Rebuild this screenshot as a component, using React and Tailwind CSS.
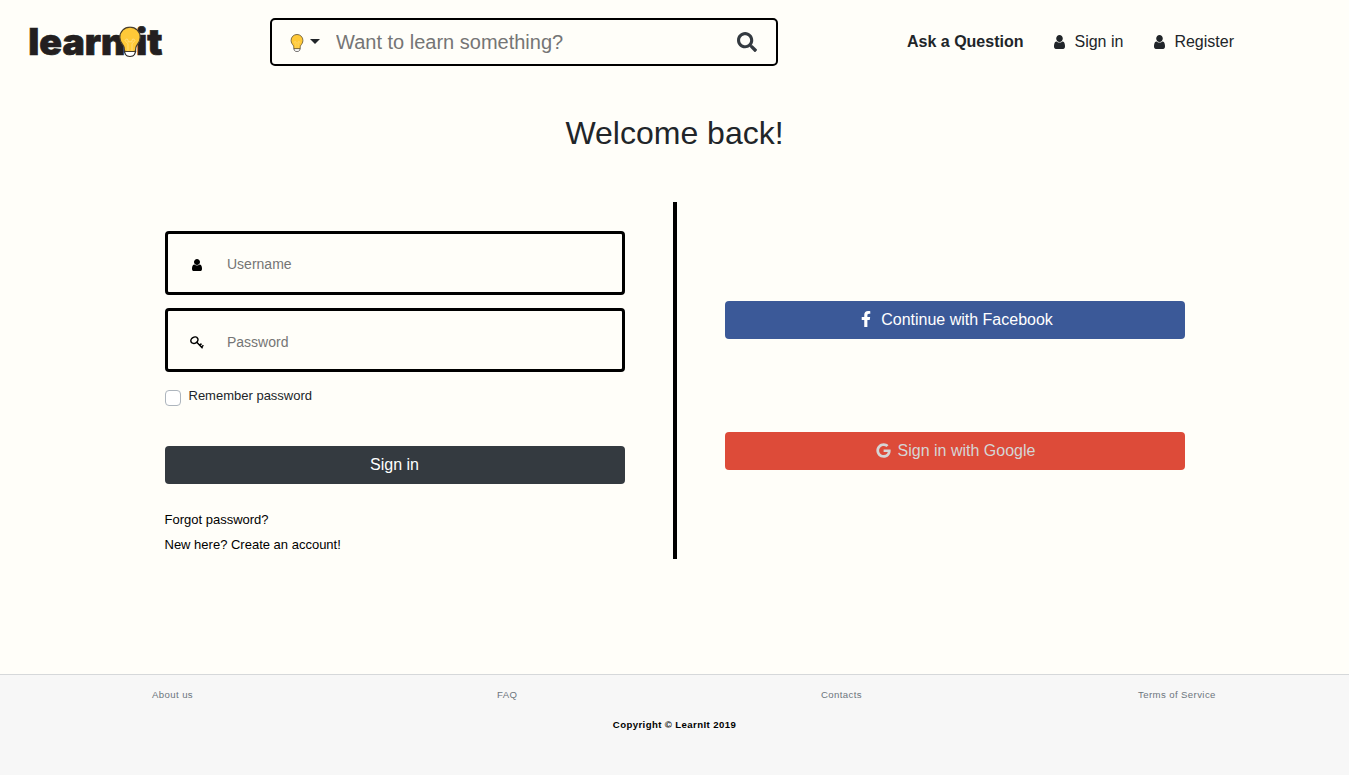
import React from "react";
import { FaSearch, FaFacebookF, FaGoogle } from "react-icons/fa";

function UserIcon({ className }) {
  return (
    <svg viewBox="256 128 1280 1536" preserveAspectRatio="none" className={className} fill="currentColor">
      <path d="M1536 1399q0 109-62.5 187t-150.5 78h-854q-88 0-150.5-78t-62.5-187q0-85 8.5-160.5t31.5-152 58.5-131 94-89 134.5-34.5q131 128 313 128t313-128q76 0 134.5 34.5t94 89 58.5 131 31.5 152 8.5 160.5zm-256-887q0 159-112.5 271.5t-271.5 112.5-271.5-112.5-112.5-271.5 112.5-271.5 271.5-112.5 271.5 112.5 112.5 271.5z" />
    </svg>
  );
}

function KeyIcon({ className }) {
  return (
    <svg viewBox="0 0 14 13" className={className} fill="none" stroke="currentColor" strokeWidth="1.5">
      <ellipse cx="4.400" cy="4.200" rx="3.700" ry="3" transform="rotate(-30 4.4 4.2)" />
      <path d="M6.800 6.200 12.600 12.200M9.800 9.300l1.700-1.700M11.600 11l1.800-1.700" />
    </svg>
  );
}

function Bulb({ className }) {
  return (
    <svg viewBox="0 0 22 31" className={className}>
      <path d="M5.300 25h11.400l-1.200 3.200c-.8 1.300-2.500 2-4.500 2s-3.700-.7-4.500-2z" fill="#fff" stroke="#231f20" strokeWidth="1.100" />
      <path d="M11 .8C5.200.8.8 5.300.8 11c0 4.300 2.200 6.600 3.700 8.600.8 1.200.9 2.700.9 4.200 0 .9.500 1.400 1.300 1.400h8.600c.8 0 1.300-.5 1.300-1.400 0-1.500.1-3 .9-4.200 1.500-2 3.700-4.300 3.700-8.600C21.200 5.300 16.800.8 11 .8z" fill="#ffc938" stroke="#4a3f2c" strokeWidth="1.200" />
      <path d="M9 24.500v-7.200L6.700 15.200a1.400 1.400 0 1 1 2.300-1.300v1.600h4v-1.600a1.400 1.400 0 1 1 2.300 1.300L13 17.300v7.200" fill="none" stroke="#ffdf80" strokeWidth=".9" />
    </svg>
  );
}

function Logo() {
  return (
    <svg viewBox="0 0 150 60" className="h-[60px] w-[150px] overflow-visible" role="img" aria-label="learnit">
      <g fill="#231f20" stroke="#231f20" strokeWidth="0.7" fontFamily="Inter, sans-serif" fontWeight="900" fontSize="36.5">
        <text x="1.300" y="43" textLength="97" lengthAdjust="spacingAndGlyphs">learn</text>
        <text x="109" y="43" textLength="26.500" lengthAdjust="spacingAndGlyphs">it</text>
      </g>
      <svg x="92" y="14.300" width="22" height="31"><Bulb /></svg>
    </svg>
  );
}

function Field({ icon, label, type, inputClass }) {
  return (
    <label className="flex h-16 items-center rounded border-[3px] border-black">
      <span className="flex w-[59px] justify-center pt-1 pr-[2px]">{icon}</span>
      <input type={type} placeholder={label} className={`w-80 bg-transparent text-sm outline-none placeholder:text-[#757575] ${inputClass}`} />
    </label>
  );
}

export default function App() {
  return (
    <div className="flex h-[775px] w-[1349px] flex-col overflow-hidden bg-[#fffef9] font-['Liberation_Sans',Arial,sans-serif] text-[#212529]">
      <header className="flex h-[84px] items-center">
        <div className="w-[270px] pl-[27px]"><Logo /></div>
        <div className="flex h-12 w-[508px] items-center rounded-[5px] border-2 border-black pr-[19px] pl-[18px]">
          <Bulb className="mt-0.5 h-[18px] w-[14px]" />
          <span className="mb-0.5 ml-1.5 border-x-[5px] border-t-[5px] border-x-transparent border-t-[#212529]" />
          <input placeholder="Want to learn something?" className="ml-4 w-[300px] flex-1 bg-transparent text-xl outline-none placeholder:text-[#757575]" />
          <FaSearch className="h-5 w-5 text-[#343a40]" />
        </div>
        <nav className="ml-[129px] flex items-center">
          <a className="font-bold">Ask a Question</a>
          <a className="ml-[31px] flex items-center"><UserIcon className="mr-[9px] mb-px h-[14px] w-[11px]" />Sign in</a>
          <a className="ml-[31px] flex items-center"><UserIcon className="mr-[9px] mb-px h-[14px] w-[11px]" />Register</a>
        </nav>
      </header>
      <h1 className="mt-7 text-center text-[32px] leading-[42px]">Welcome back!</h1>
      <main className="mr-[164px] ml-[165px] mt-12 flex h-[357px]">
        <form className="w-[460px] shrink-0 pt-[29px]">
          <Field type="text" label="Username" inputClass="pt-0.5" icon={<UserIcon className="h-3 w-[10px] text-black" />} />
          <div className="mt-[13px]"><Field type="password" label="Password" inputClass="pt-1" icon={<KeyIcon className="h-[13px] w-[14px] text-black" />} /></div>
          <label className="mt-[14px] flex h-5 text-[13px]">
            <span className="mt-1 mr-[7.5px] h-4 w-4 rounded border border-[#adb5bd] bg-white" />
            <span className="leading-5">Remember password</span>
          </label>
          <button type="button" className="mt-10 h-[38px] w-full rounded bg-[#343a40] pr-px text-base text-white">Sign in</button>
          <div className="mt-[23px] -ml-[0.5px] flex flex-col text-[13px] leading-[25px] text-black">
            <a>Forgot password?</a>
            <a>New here? Create an account!</a>
          </div>
        </form>
        <div className="ml-12 w-1 shrink-0 bg-black" />
        <div className="ml-12 w-[460px] shrink-0 pt-[99px]">
          <button className="flex h-[38px] w-full items-center justify-center rounded bg-[#3b5998] pl-px text-white"><FaFacebookF className="mr-[7px] mb-0.5 h-4 w-4" />Continue with Facebook</button>
          <button className="mt-[93px] flex h-[38px] w-full items-center justify-center rounded bg-[#dd4b39] pl-px text-[#d5d5d5]"><FaGoogle className="mr-[7px] mb-px h-[15px] w-[15px]" />Sign in with Google</button>
        </div>
      </main>
      <footer className="mt-[115px] flex-1 border-t border-[#d6d8da] bg-[#f7f7f7] text-[9.6px] tracking-[0.4px]">
        <div className="flex h-[41px] items-center text-[#6c757d]">
          <a className="ml-[152px] w-[345px]">About us</a>
          <a className="w-[324px]">FAQ</a>
          <a className="w-[317px]">Contacts</a>
          <a>Terms of Service</a>
        </div>
        <p className="mt-0.5 text-center font-bold text-black">Copyright © LearnIt 2019</p>
      </footer>
    </div>
  );
}
